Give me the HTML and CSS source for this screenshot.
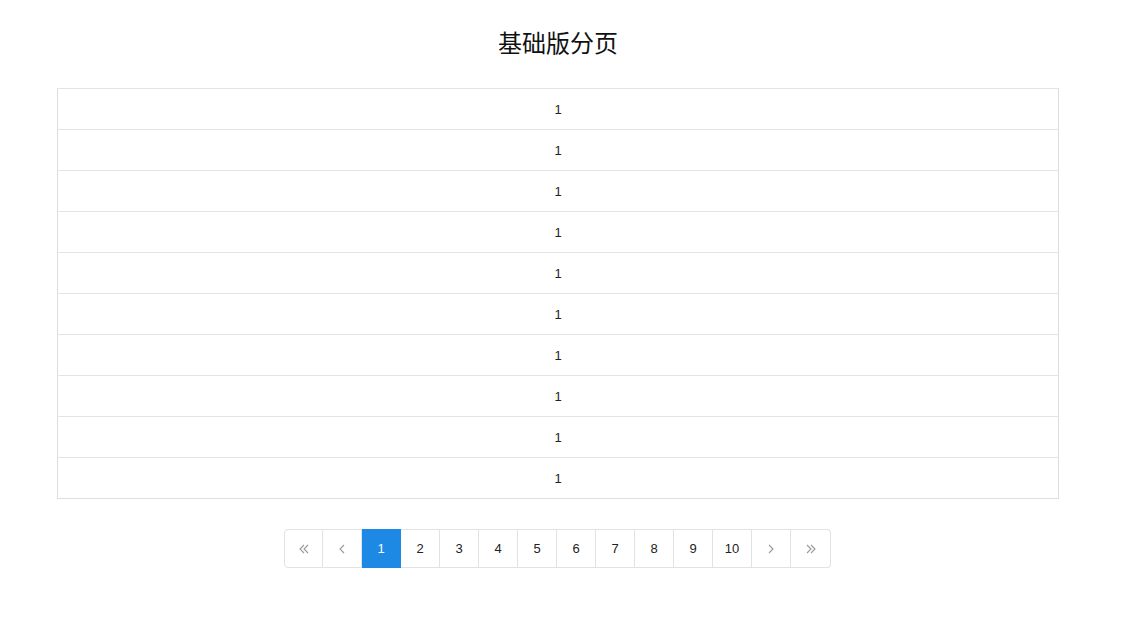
FILE: index.html
```html
<!DOCTYPE html>
<html lang="zh-CN">
<head>
    <meta charset="UTF-8">
    <title>基础版分页</title>
    <link rel="stylesheet" href="styles.css">
</head>
<body>
    <div class="page">
        <h1 class="title">基础版分页</h1>
        <table class="list">
            <tbody>
                <tr><td>1</td></tr>
                <tr><td>1</td></tr>
                <tr><td>1</td></tr>
                <tr><td>1</td></tr>
                <tr><td>1</td></tr>
                <tr><td>1</td></tr>
                <tr><td>1</td></tr>
                <tr><td>1</td></tr>
                <tr><td>1</td></tr>
                <tr><td>1</td></tr>
            </tbody>
        </table>
        <div class="pager">
            <a class="pager-item pager-icon" href="#">
                <svg width="14" height="14" viewBox="0 0 14 14" fill="none">
                    <path d="M7 3L3 7l4 4M11 3L7 7l4 4" stroke="currentColor" stroke-width="1.1"/>
                </svg>
            </a>
            <a class="pager-item pager-icon" href="#">
                <svg width="14" height="14" viewBox="0 0 14 14" fill="none">
                    <path d="M9 3L5 7l4 4" stroke="currentColor" stroke-width="1.1"/>
                </svg>
            </a>
            <a class="pager-item active" href="#">1</a>
            <a class="pager-item" href="#">2</a>
            <a class="pager-item" href="#">3</a>
            <a class="pager-item" href="#">4</a>
            <a class="pager-item" href="#">5</a>
            <a class="pager-item" href="#">6</a>
            <a class="pager-item" href="#">7</a>
            <a class="pager-item" href="#">8</a>
            <a class="pager-item" href="#">9</a>
            <a class="pager-item" href="#">10</a>
            <a class="pager-item pager-icon" href="#">
                <svg width="14" height="14" viewBox="0 0 14 14" fill="none">
                    <path d="M5 3l4 4-4 4" stroke="currentColor" stroke-width="1.1"/>
                </svg>
            </a>
            <a class="pager-item pager-icon" href="#">
                <svg width="14" height="14" viewBox="0 0 14 14" fill="none">
                    <path d="M3 3l4 4-4 4M7 3l4 4-4 4" stroke="currentColor" stroke-width="1.1"/>
                </svg>
            </a>
        </div>
    </div>
</body>
</html>
```

FILE: styles.css
```css
* {
    margin: 0;
    padding: 0;
    box-sizing: border-box;
}

body {
    font-family: "Liberation Sans", Arial, "Noto Sans CJK SC", sans-serif;
    background: #fff;
    color: #333;
}

.page {
    width: 1002px;
    margin-left: 57px;
    padding-top: 27px;
}

.title {
    font-size: 24px;
    font-weight: 400;
    color: #111;
    text-align: center;
    line-height: 30px;
    margin-bottom: 31px;
    font-family: "Noto Sans CJK SC", sans-serif;
}

.list {
    width: 100%;
    border-collapse: collapse;
    border: 1px solid #ddd;
}

.list td {
    height: 41px;
    border-top: 1px solid #e4e4e4;
    text-align: center;
    font-size: 13px;
    color: #222;
}

.pager {
    display: flex;
    justify-content: center;
    margin-top: 30px;
    padding-right: 1px;
}

.pager-item {
    width: 39px;
    height: 39px;
    display: flex;
    align-items: center;
    justify-content: center;
    border: 1px solid #e2e2e2;
    border-left: none;
    font-size: 13px;
    color: #222;
    text-decoration: none;
}

.pager-item:first-child {
    border-left: 1px solid #e2e2e2;
    border-radius: 4px 0 0 4px;
}

.pager-item:last-child {
    width: 40px;
    border-radius: 0 4px 4px 0;
}

.pager-icon {
    color: #999;
}

.pager-item.active {
    background: #1e88e5;
    border-color: #1e88e5;
    color: #fff;
}
```
